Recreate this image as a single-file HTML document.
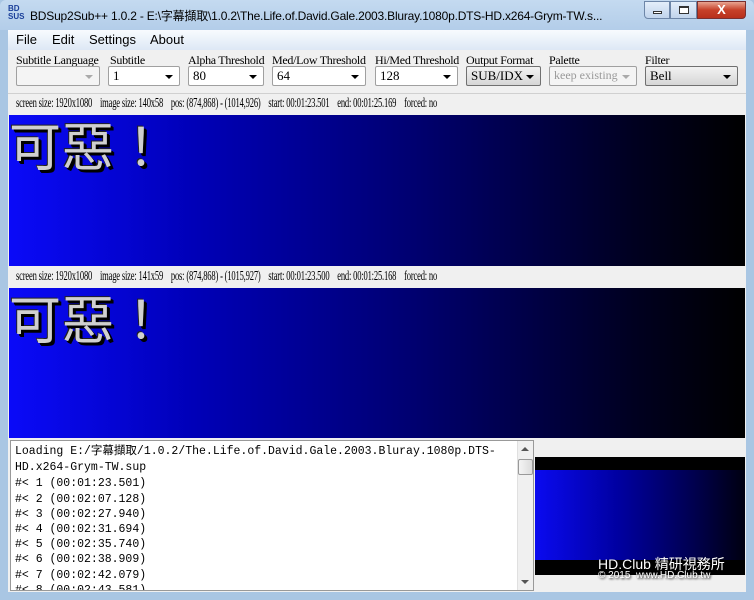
<!DOCTYPE html>
<html><head><meta charset="utf-8"><style>
*{margin:0;padding:0;box-sizing:border-box}
body{width:754px;height:600px;overflow:hidden;background:#a9c6e3;font-family:"Liberation Sans","Noto Sans CJK TC",sans-serif;position:relative}
.abs{position:absolute}
.title{left:0;top:0;width:754px;height:30px;background:linear-gradient(#c4daf0,#b3cde9);border-radius:6px 6px 0 0}
.ttext{left:30px;top:7px;font-size:12px;color:#000;white-space:nowrap;letter-spacing:-0.2px}
.menu{left:8px;top:30px;width:738px;height:20px;background:linear-gradient(#f8fbfe,#dde8f5);font-size:13px}
.menu span{position:absolute;top:2px}
.tool{left:8px;top:50px;width:738px;height:542px;background:#f0f0f0}
.lbl{font-family:"Liberation Serif","Noto Serif CJK SC",serif;font-size:12px;top:53px;letter-spacing:-0.3px;white-space:nowrap}
.cb{top:66px;height:20px;background:#fff;border:1px solid #a0a0a0;font-family:"Liberation Serif",serif;font-size:13px;padding:1px 4px;border-radius:2px;white-space:nowrap;overflow:hidden}
.cb:after{content:"";position:absolute;right:6px;top:8px;border-left:4px solid transparent;border-right:4px solid transparent;border-top:4px solid #000}
.dis{background:#f4f4f4;color:#999}.dis:after{border-top-color:#aaa}
.btn{background:linear-gradient(#f2f2f2,#d6d6d6);border-color:#707070}
.info{font-family:"Liberation Serif",serif;font-size:14px;letter-spacing:-0.3px;white-space:nowrap;left:16px;transform:scaleX(0.61);transform-origin:0 0}
.img{left:9px;width:736px;background:linear-gradient(90deg,#0a0af8 0%,#0000b8 25%,#000070 55%,#000020 85%,#000 100%)}
.sub{left:9px;font-size:52px;line-height:56px;color:#d0d0d0;font-family:"Noto Sans CJK TC",sans-serif;text-shadow:2px 2px 0 #000,3px 3px 0 #000,-1px -1px 0 #222;letter-spacing:1px}
.log{left:10px;top:440px;width:524px;height:151px;background:#fff;border:1px solid #999;font-family:"Liberation Mono","Noto Sans CJK TC",monospace;font-size:11.5px;line-height:15.2px;padding:3px 0 0 4px;overflow:hidden;white-space:pre}
</style></head><body>
<div class="abs title"></div>
<div class="abs" style="left:8px;top:5px;width:16px;height:16px;font-size:8px;font-weight:bold;line-height:8px;color:#1a3f9a">BD<br>SUS</div>
<div class="abs ttext">BDSup2Sub++ 1.0.2 - E:\字幕擷取\1.0.2\The.Life.of.David.Gale.2003.Bluray.1080p.DTS-HD.x264-Grym-TW.s...</div>
<div class="abs" style="left:644px;top:1px;width:26px;height:18px;border:1px solid #6d86a8;border-radius:0 0 0 4px;background:linear-gradient(#e3eefa,#c1d4ec)"><div class="abs" style="left:8px;top:9px;width:9px;height:3px;border:1px solid #333;background:#fff"></div></div>
<div class="abs" style="left:670px;top:1px;width:27px;height:18px;border:1px solid #6d86a8;background:linear-gradient(#e3eefa,#c1d4ec)"><div class="abs" style="left:8px;top:4px;width:10px;height:8px;border:1px solid #333;border-top-width:2px;background:#fff"></div></div>
<div class="abs" style="left:697px;top:1px;width:49px;height:18px;border:1px solid #7a3030;border-radius:0 0 4px 0;background:linear-gradient(#e8a592,#c7412a 50%,#b8301c);color:#fff;font-weight:bold;font-size:13px;text-align:center;line-height:16px">X</div>
<div class="abs menu"><span style="left:8px">File</span><span style="left:44px">Edit</span><span style="left:81px">Settings</span><span style="left:142px">About</span></div>
<div class="abs tool"></div>
<div class="abs lbl" style="left:16px">Subtitle Language</div>
<div class="abs lbl" style="left:110px">Subtitle</div>
<div class="abs lbl" style="left:188px">Alpha Threshold</div>
<div class="abs lbl" style="left:272px">Med/Low Threshold</div>
<div class="abs lbl" style="left:375px">Hi/Med Threshold</div>
<div class="abs lbl" style="left:466px">Output Format</div>
<div class="abs lbl" style="left:549px">Palette</div>
<div class="abs lbl" style="left:645px">Filter</div>
<div class="abs cb dis" style="left:16px;width:84px"></div>
<div class="abs cb" style="left:108px;width:72px">1</div>
<div class="abs cb" style="left:188px;width:76px">80</div>
<div class="abs cb" style="left:272px;width:94px">64</div>
<div class="abs cb" style="left:375px;width:83px">128</div>
<div class="abs cb btn" style="left:466px;width:75px">SUB/IDX</div>
<div class="abs cb dis" style="left:549px;width:88px;font-size:12px">keep existing</div>
<div class="abs cb btn" style="left:645px;width:93px">Bell</div>
<div class="abs" style="left:8px;top:93px;width:738px;height:1px;background:#d0d0d0"></div>
<div class="abs info" style="top:96px">screen size: 1920x1080 &nbsp;&nbsp; image size: 140x58 &nbsp;&nbsp; pos: (874,868) - (1014,926) &nbsp;&nbsp; start: 00:01:23.501 &nbsp;&nbsp; end: 00:01:25.169 &nbsp;&nbsp; forced: no</div>
<div class="abs img" style="top:115px;height:151px"></div>
<div class="abs sub" style="top:116px">可惡！</div>
<div class="abs info" style="top:269px">screen size: 1920x1080 &nbsp;&nbsp; image size: 141x59 &nbsp;&nbsp; pos: (874,868) - (1015,927) &nbsp;&nbsp; start: 00:01:23.500 &nbsp;&nbsp; end: 00:01:25.168 &nbsp;&nbsp; forced: no</div>
<div class="abs img" style="top:288px;height:150px"></div>
<div class="abs sub" style="top:289px">可惡！</div>
<div class="abs log">Loading E:/字幕擷取/1.0.2/The.Life.of.David.Gale.2003.Bluray.1080p.DTS-
<span style="position:relative;top:1px">HD.x264-Grym-TW.sup</span>
<span style="display:block;position:relative;top:2px">#&lt; 1 (00:01:23.501)
#&lt; 2 (00:02:07.128)
#&lt; 3 (00:02:27.940)
#&lt; 4 (00:02:31.694)
#&lt; 5 (00:02:35.740)
#&lt; 6 (00:02:38.909)
#&lt; 7 (00:02:42.079)
#&lt; 8 (00:02:43.581)</span></div>
<div class="abs" style="left:517px;top:441px;width:16px;height:149px;background:#f0f0f0;border-left:1px solid #e0e0e0"></div>
<div class="abs" style="left:521px;top:447px;border-left:4px solid transparent;border-right:4px solid transparent;border-bottom:4px solid #555"></div>
<div class="abs" style="left:518px;top:459px;width:15px;height:16px;border:1px solid #999;border-radius:2px;background:linear-gradient(90deg,#f4f4f4,#dcdcdc)"></div>
<div class="abs" style="left:521px;top:580px;border-left:4px solid transparent;border-right:4px solid transparent;border-top:4px solid #555"></div>
<div class="abs" style="left:535px;top:457px;width:210px;height:118px;background:#000"></div>
<div class="abs" style="left:535px;top:470px;width:210px;height:90px;background:linear-gradient(90deg,#0a0af0,#0000a0 40%,#000050 75%,#000010)"></div>
<div class="abs" style="left:598px;top:554px;color:#fff;font-size:14px;white-space:nowrap;text-shadow:1px 1px 2px #000">HD.Club 精研視務所</div>
<div class="abs" style="left:598px;top:570px;color:#fff;font-size:10px;white-space:nowrap;text-shadow:1px 1px 2px #000">© 2015 &nbsp;www.HD.Club.tw</div>
</body></html>
